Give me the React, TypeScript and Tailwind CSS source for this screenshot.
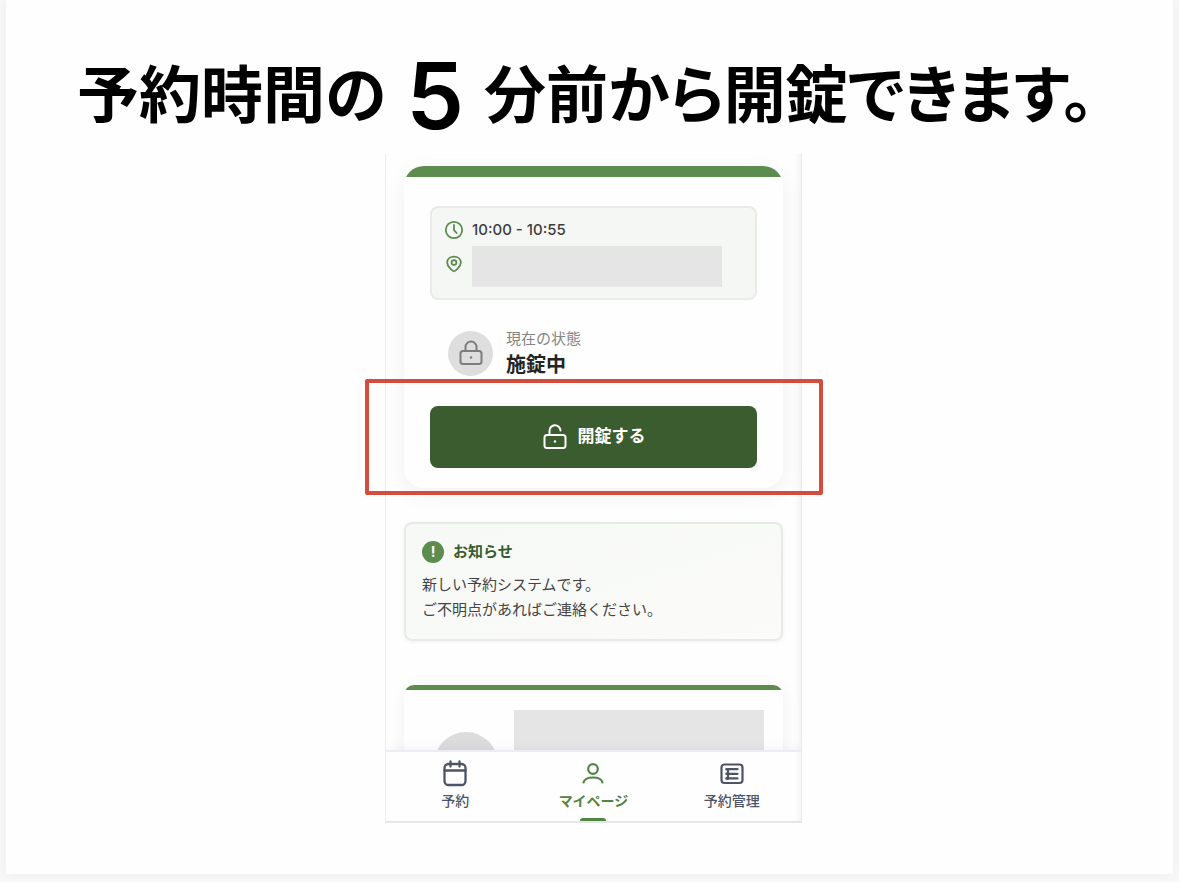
import type { ReactNode } from "react";

function ClockIcon() {
  return (
    <svg viewBox="0 0 20 20" fill="none" stroke="currentColor" strokeWidth="1.8" strokeLinecap="round" strokeLinejoin="round" className="size-5">
      <circle cx="10" cy="10" r="8.2" />
      <path d="M10 5v5.2l2.6 2.8" />
    </svg>
  );
}

function PinIcon() {
  return (
    <svg viewBox="0 0 20 20" fill="none" stroke="currentColor" strokeWidth="1.8" strokeLinecap="round" strokeLinejoin="round" className="size-5">
      <path d="M10 17.3c-.8 0-6.8-4-6.8-8.8C3.2 5 6.2 2.7 10 2.7s6.800 2.300 6.800 5.800c0 4.800-6 8.800-6.800 8.800z" />
      <circle cx="10" cy="8.6" r="2.4" />
    </svg>
  );
}

function LockIcon({ open = false }: { open?: boolean }) {
  return (
    <svg viewBox="0 0 26 28" fill="none" stroke="currentColor" strokeWidth="2" strokeLinecap="round" strokeLinejoin="round" className="h-7 w-[26px] shrink-0">
      <rect x="2.5" y="12" width="21" height="13" rx="2.5" />
      {open ? <path d="M7.500 12V8a5.500 5.500 0 0 1 11-.5" /> : <path d="M7.500 12V8a5.500 5.500 0 0 1 11 0v4" />}
      <circle cx="13" cy="18.5" r="1.2" fill="currentColor" stroke="none" />
    </svg>
  );
}

function CalendarIcon() {
  return (
    <svg viewBox="0 0 26 28" fill="none" stroke="currentColor" strokeWidth="2.3" strokeLinecap="round" strokeLinejoin="round" className="h-7 w-[26px]">
      <rect x="2.5" y="4" width="21" height="21" rx="4" />
      <path d="M2.500 10.500h21M8.500 1.500v5M17.500 1.500v5" />
    </svg>
  );
}

function PersonIcon() {
  return (
    <svg viewBox="0 0 26 28" fill="none" stroke="currentColor" strokeWidth="2.2" strokeLinecap="round" className="h-7 w-[26px]">
      <circle cx="13" cy="9" r="4.8" />
      <path d="M3.500 22.500C4.500 18.800 8 17.500 13 17.500s8.500 1.300 9.500 5" />
    </svg>
  );
}

function ListIcon() {
  return (
    <svg viewBox="0 0 26 28" fill="none" stroke="currentColor" strokeWidth="2.2" strokeLinecap="round" className="h-7 w-[26px]">
      <rect x="2.5" y="4.5" width="21" height="18.5" rx="3" />
      <path d="M9 9v10M9 9.200h9.500M9 13.800h9.500M9 18.400h9.500" />
      <path d="M7.500 9.200h1M7.500 13.800h1M7.500 18.400h1" strokeWidth="2.6" />
    </svg>
  );
}

interface NavItemProps {
  label: string;
  icon: ReactNode;
  active?: boolean;
}

function NavItem({ label, icon, active = false }: NavItemProps) {
  return (
    <a
      href="#"
      aria-current={active ? "page" : undefined}
      className={`relative flex flex-1 flex-col items-center pt-2 text-sm leading-5 ${
        active ? "font-bold text-[#528444]" : "font-medium text-[#4d5467]"
      }`}
    >
      {icon}
      <span className="mt-[3px]">{label}</span>
      {active && <span className="absolute bottom-0 h-[3px] w-[26px] rounded-t bg-[#528444]" />}
    </a>
  );
}

export default function App() {
  return (
    <div className="min-h-screen bg-[#f8f8f8] px-[6px] pb-2 font-['Inter','Noto_Sans_CJK_JP',sans-serif]">
      <main className="flex min-h-[874px] flex-col items-center bg-[#fefefe] pt-14 pl-2 shadow-[0_0_12px_rgba(0,0,0,0.05)]">
        <h1 className="mr-4 flex h-20 items-center justify-center whitespace-nowrap text-[62px] leading-none font-bold text-black [font-feature-settings:'palt']">
          <span>予約時間の</span>
          <span className="mx-5 text-[92px] font-semibold">5</span>
          <span>分前から開錠できます。</span>
        </h1>

        <div className="relative mt-[18px] w-full max-w-[417px]">
          <section className="overflow-hidden border-x border-b-2 border-x-[#ececee] border-b-[#e6e6e8] bg-[#fefefe] shadow-[inset_-6px_0_6px_-4px_rgba(0,0,0,0.06)]">
            <div className="px-[18px] pt-3">
              {/* Current reservation */}
              <article className="overflow-hidden rounded-[20px] bg-[#fefefe] shadow-[0_6px_24px_rgba(0,0,0,0.06)]">
                <div className="h-[11px] bg-[#5d8c4f]" />
                <div className="px-[26px] pt-[29px] pb-5">
                  <div className="rounded-lg border-2 border-[#e9ebe7] bg-[#f5f7f5] px-3 pt-3 pb-[11px] text-[#5d8c4f]">
                    <div className="flex items-center gap-2">
                      <ClockIcon />
                      <time className="text-[15px] leading-5 font-medium text-[#3e3e3e]">10:00 - 10:55</time>
                    </div>
                    <div className="mt-[6px] flex gap-2">
                      <span className="pt-2">
                        <PinIcon />
                      </span>
                      <div className="h-[41px] w-[250px] bg-[#e5e5e5]" />
                    </div>
                  </div>

                  <div className="mt-[27px] flex items-center gap-[13px] pl-[18px]">
                    <div className="flex size-[45px] items-center justify-center rounded-full bg-[#dedede] text-[#7c7c7c]">
                      <LockIcon />
                    </div>
                    <div>
                      <p className="text-[15px] leading-6 text-[#858585]">現在の状態</p>
                      <p className="text-xl leading-7 font-bold text-[#242424]">施錠中</p>
                    </div>
                  </div>

                  <button type="button" className="mt-[27px] flex h-[62px] w-full cursor-pointer items-center justify-center gap-[10px] rounded-lg bg-[#3b5c2e] text-[17px] font-bold text-white">
                    <LockIcon open />
                    開錠する
                  </button>
                </div>
              </article>

              {/* Notice */}
              <article className="mt-[34px] rounded-lg border-2 border-[#e6ebe5] bg-gradient-to-br from-[#f6f9f5] to-[#fbfbfa] px-4 pt-4 pb-[17px] shadow-[0_1px_4px_rgba(0,0,0,0.05)]">
                <h2 className="flex items-center gap-[9px] text-[15px] leading-6 font-bold text-[#385d2f]">
                  <span className="flex size-[22px] items-center justify-center rounded-full bg-[#5d8c4f] text-sm text-white">!</span>
                  お知らせ
                </h2>
                <p className="mt-2 text-[15px] leading-[25px] text-[#444444]">
                  新しい予約システムです。
                  <br />
                  ご不明点があればご連絡ください。
                </p>
              </article>

              {/* Profile */}
              <div className="mt-[44px] h-[65px]">
                <article className="h-24 overflow-hidden rounded-[10px] bg-[#fefefe] shadow-[0_2px_16px_rgba(0,0,0,0.06)]">
                  <div className="h-[5px] bg-[#5d8c4f]" />
                  <div className="flex gap-4 pt-5 pl-[30px]">
                    <div className="mt-[22px] size-16 rounded-full bg-[#dcdcdc]" />
                    <div className="h-20 w-[250px] bg-[#e5e5e5]" />
                  </div>
                </article>
              </div>
            </div>

            <nav className="relative flex h-[71px] border-t-2 border-[#ececf2] bg-[#fefefe] shadow-[inset_-6px_0_6px_-4px_rgba(0,0,0,0.05),0_-3px_10px_rgba(0,0,0,0.04)]">
              <NavItem label="予約" icon={<CalendarIcon />} />
              <NavItem label="マイページ" icon={<PersonIcon />} active />
              <NavItem label="予約管理" icon={<ListIcon />} />
            </nav>
          </section>

          {/* Highlight frame around the unlock button */}
          <div className="pointer-events-none absolute top-[225px] -right-[21px] -left-5 h-[116px] rounded-xs border-4 border-[#d34c3c]" />
        </div>
      </main>
    </div>
  );
}
